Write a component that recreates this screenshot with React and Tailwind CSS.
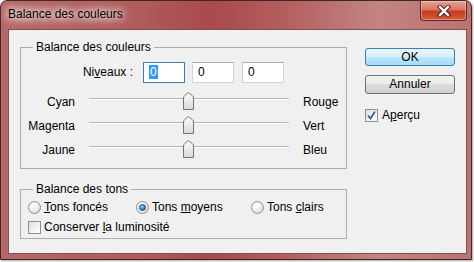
import React from "react";

function Radio({ checked }) {
  return (
    <span className="relative flex h-[13px] w-[13px] items-center justify-center rounded-full border border-[#8e8f8f] bg-[radial-gradient(circle_at_40%_35%,#ffffff_0%,#f0f0f0_40%,#cfcfcf_100%)]">
      {checked && (
        <span className="h-[7px] w-[7px] rounded-full border border-[#1b4f8a] bg-[radial-gradient(circle_at_40%_35%,#a9ddff_0%,#3d8fd6_45%,#15508f_100%)]" />
      )}
    </span>
  );
}

function Checkbox({ checked }) {
  return (
    <span className="flex h-[13px] w-[13px] items-center justify-center border border-[#8e8f8f] bg-[linear-gradient(135deg,#dcdcdc_0%,#f4f4f4_60%,#ffffff_100%)]">
      {checked && (
        <svg width="11" height="11" viewBox="0 0 11 11">
          <path d="M2 5.5 L4.5 8.5 L9 1.5" fill="none" stroke="#3c5a9a" strokeWidth="1.8" />
        </svg>
      )}
    </span>
  );
}

function Slider({ left, right }) {
  return (
    <div className="flex h-[24px]">
      <div className="w-[54px] pt-[5px] text-right">{left}</div>
      <div className="relative ml-[14px] h-[24px] w-[200px]">
        <div className="absolute left-0 top-[8px] h-[1px] w-[200px] bg-[#b6b6b6]" />
        <div className="absolute left-0 top-[9px] h-[1px] w-[200px] bg-white" />
        <svg className="absolute left-[94px] top-[2px]" width="11" height="18" viewBox="0 0 11 18">
          <defs>
            <linearGradient id={"g" + left} x1="0" y1="0" x2="0" y2="1">
              <stop offset="0" stopColor="#fafafa" />
              <stop offset="1" stopColor="#dadada" />
            </linearGradient>
          </defs>
          <path d="M0.5 17.5 V6 Q0.5 4.5 2 3.5 L4.5 1 Q5.5 0.3 6.5 1 L9 3.5 Q10.5 4.5 10.5 6 V17.5 Z" fill={"url(#g" + left + ")"} stroke="#727272" />
        </svg>
      </div>
      <div className="ml-[14px] pt-[5px]">{right}</div>
    </div>
  );
}

function Field({ children, focused }) {
  return (
    <div
      className={
        "h-[21px] w-[42px] pl-[5px] pt-[2px] " +
        (focused ? "border border-[#3d7bad] bg-white" : "border border-[#cfd3d8] border-t-[#abadb3] bg-white")
      }
    >
      {children}
    </div>
  );
}

export default function App() {
  return (
    <div className="h-[262px] w-[474px] bg-white font-['Liberation_Sans',Arial,sans-serif] text-[12px] leading-[15px] text-black">
      <div className="flex h-[260px] w-[472px] flex-col rounded-t-[7px] border border-[#402626] bg-[linear-gradient(90deg,#b66867_0%,#b05b5a_30%,#a9494b_45%,#b35e5e_60%,#c28483_80%,#bd7170_100%)] shadow-[1px_1px_2px_rgba(0,0,0,0.35)]">
        {/* title bar */}
        <div className="flex h-[28px] shrink-0">
          <div className="pl-[7px] pt-[6px] [text-shadow:0_0_6px_#ffffff,0_0_10px_#ffffff,0_0_14px_#ffffff]">
            Balance des couleurs
          </div>
          <div className="ml-auto mr-[4px] flex h-[20px] w-[47px] items-center justify-center rounded-b-[4px] border border-t-0 border-[#5a2a24] bg-[linear-gradient(180deg,#e6a192_0%,#d8765f_45%,#c63c22_55%,#d65a3c_100%)] shadow-[inset_0_0_0_1px_rgba(255,255,255,0.35)]">
            <svg width="14" height="12" viewBox="0 0 14 12">
              <path d="M3 2 L11 10 M11 2 L3 10" stroke="#3e1a14" strokeWidth="4.2" strokeLinecap="square" />
              <path d="M3 2 L11 10 M11 2 L3 10" stroke="#ffffff" strokeWidth="2.4" strokeLinecap="square" />
            </svg>
          </div>
        </div>

        {/* client */}
        <div className="ml-[7px] flex h-[225px] w-[459px] border border-[#7d5151] bg-[#f0f0f0]">
          <div className="ml-[11px] flex w-[327px] flex-col pt-[10px]">
            <fieldset className="border border-[#adadad]">
              <legend className="ml-[12px] px-[3px]">Balance des couleurs</legend>
              <div className="flex items-center pt-[7px]">
                <div className="w-[112px] text-right">
                  Ni<span className="underline">v</span>eaux :
                </div>
                <div className="ml-[10px]">
                  <Field focused>
                    <span className="bg-[#3399ff] px-[1px] text-white">0</span>
                  </Field>
                </div>
                <div className="ml-[7px]">
                  <Field>0</Field>
                </div>
                <div className="ml-[8px]">
                  <Field>0</Field>
                </div>
              </div>
              <div className="mt-[7px] pb-[6px]">
                <Slider left="Cyan" right="Rouge" />
                <Slider left="Magenta" right="Vert" />
                <Slider left="Jaune" right="Bleu" />
              </div>
            </fieldset>

            <fieldset className="mt-[13px] border border-[#adadad]">
              <legend className="ml-[12px] px-[3px]">Balance des tons</legend>
              <div className="flex h-[21px] items-center pl-[7px]">
                <div className="flex w-[108px] items-center gap-[3px]">
                  <Radio />
                  <span>
                    <span className="underline">T</span>ons foncés
                  </span>
                </div>
                <div className="flex w-[115px] items-center gap-[3px]">
                  <Radio checked />
                  <span>
                    Tons <span className="underline">m</span>oyens
                  </span>
                </div>
                <div className="flex items-center gap-[3px]">
                  <Radio />
                  <span>
                    Tons <span className="underline">c</span>lairs
                  </span>
                </div>
              </div>
              <div className="flex h-[20px] items-center gap-[3px] pb-[2px] pl-[7px]">
                <Checkbox />
                <span>
                  Conserver <span className="underline">l</span>a luminosité
                </span>
              </div>
            </fieldset>
          </div>

          <div className="ml-[18px] flex w-[90px] flex-col pt-[18px]">
            <div className="flex h-[18px] items-center justify-center rounded-[3px] border border-[#3c7fb1] bg-[linear-gradient(180deg,#eaf6fd_0%,#d9f0fc_50%,#bee6fd_50%,#a7d9f5_100%)]">
              OK
            </div>
            <div className="mt-[9px] flex h-[19px] items-center justify-center rounded-[3px] border border-[#707070] bg-[linear-gradient(180deg,#f2f2f2_0%,#ebebeb_50%,#dddddd_50%,#cfcfcf_100%)]">
              Annuler
            </div>
            <div className="mt-[14px] flex items-center gap-[4px]">
              <Checkbox checked />
              <span>
                A<span className="underline">p</span>erçu
              </span>
            </div>
          </div>
        </div>
      </div>
    </div>
  );
}
